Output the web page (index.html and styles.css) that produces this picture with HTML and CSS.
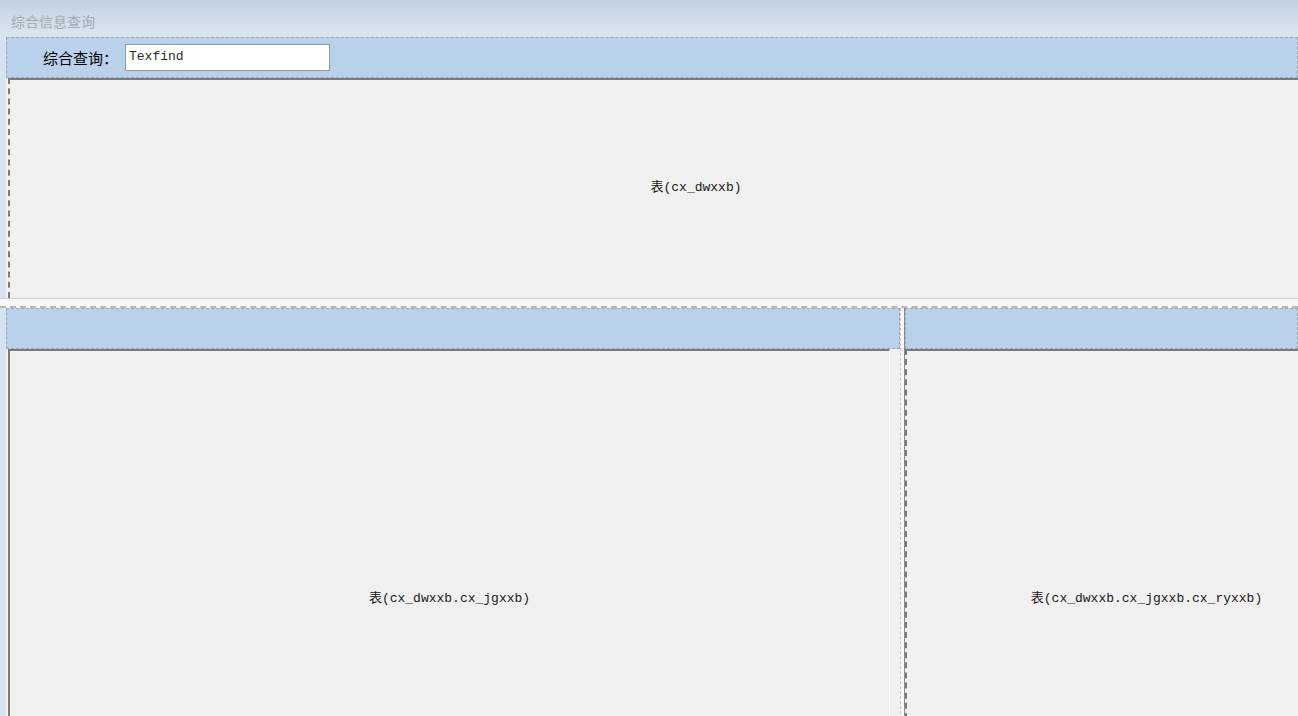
FILE: index.html
```html
<!DOCTYPE html>
<html lang="zh-CN">
<head>
    <meta charset="UTF-8">
    <title>综合信息查询</title>
    <link rel="stylesheet" href="styles.css">
</head>
<body>

<!-- 标题栏 -->
<div class="titlebar">综合信息查询</div>

<div class="page">
    <!-- 查询条件 -->
    <div class="panel-head search-bar">
        <label for="find">综合查询：</label>
        <input type="text" id="find" value="Texfind">
    </div>

    <!-- 单位信息表 -->
    <div class="grid grid-top">表(cx_dwxxb)</div>

    <div class="hsplit"></div>

    <div class="bottom">
        <div class="pane pane-left">
            <div class="panel-head"></div>
            <div class="grid grid-bottom">表(cx_dwxxb.cx_jgxxb)</div>
        </div>
        <div class="vsplit"></div>
        <div class="pane pane-right">
            <div class="panel-head"></div>
            <div class="grid grid-bottom">表(cx_dwxxb.cx_jgxxb.cx_ryxxb)</div>
        </div>
    </div>
</div>

</body>
</html>
```

FILE: styles.css
```css
html, body {
    margin: 0;
    padding: 0;
    height: 100%;
    overflow: hidden;
}

body {
    background: #f0f0f0;
    font-family: "Noto Sans CJK SC", sans-serif;
}

.titlebar {
    height: 37px;
    box-sizing: border-box;
    padding: 11px 0 0 11px;
    font-size: 14px;
    line-height: 20px;
    color: #a3abb4;
    background: linear-gradient(to bottom, #c2d1df, #dbe6f1);
}

.page {
    height: 679px;
    overflow: hidden;
    padding-left: 6px;
    background: linear-gradient(to right, #d6e4f2 0, #d6e4f2 6px, #f0f0f0 6px);
}

.panel-head {
    height: 41px;
    box-sizing: border-box;
    background: #b9d1ea;
    border: 1px dashed #a2a6ab;
}

.search-bar {
    display: flex;
    align-items: center;
    padding-left: 36px;
}

.search-bar label {
    font-size: 15px;
    color: #000;
    width: 82px;
}

.search-bar input {
    width: 205px;
    height: 27px;
    box-sizing: border-box;
    border: 1px solid #8e9e8c;
    padding: 0 3px 2px;
    font-family: "Liberation Mono", "Noto Sans CJK SC", monospace;
    font-size: 13px;
    color: #1d3020;
    background: #fff;
    outline: none;
}

.grid {
    box-sizing: border-box;
    background: #f0f0f0;
    border-left: 2px solid #7a7a7a;
    border-top: 2px solid #7a7a7a;
    margin-left: 2px;
    display: flex;
    justify-content: center;
    align-items: center;
    font-family: "Liberation Mono", "Noto Sans CJK SC", monospace;
    font-size: 13px;
    color: #1a1a1a;
}

/* 表格实际比窗口宽，文字按整表居中 */
.grid-top {
    height: 220px;
    padding: 0 0 8px 84px;
    border-left-style: dashed;
}

.hsplit {
    height: 10px;
    box-sizing: border-box;
    background: #f7f7f7;
    border-top: 1px solid #d0d0d0;
    border-bottom: 2px dashed #b8b8b8;
    margin-left: -6px;
}

.bottom {
    display: flex;
}

.pane-left {
    width: 894px;
}

.pane-left .grid {
    margin-right: 10px;
    border-right: 1px solid #fff;
}

.pane-right {
    flex: 1;
}

.pane-right .grid {
    margin-left: 0;
    border-left-style: dashed;
    padding-left: 88px;
}

.grid-bottom {
    height: 380px;
    padding-top: 112px;
}

.vsplit {
    width: 5px;
    background: #f7f7f7;
    border-left: 1px dashed #c4c4c4;
    border-right: 1px solid #8a8a8a;
    box-sizing: border-box;
}
```
